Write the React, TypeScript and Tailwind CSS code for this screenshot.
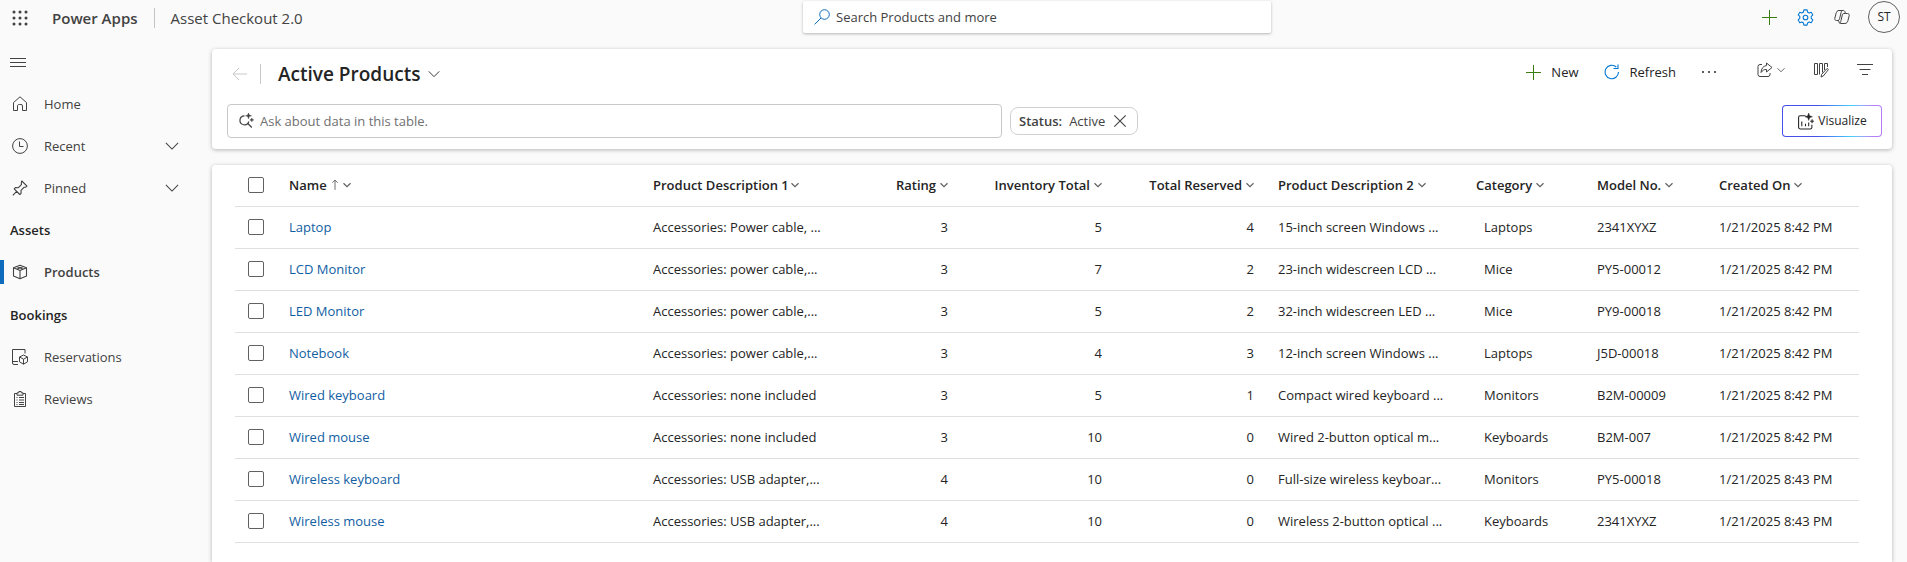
import React from "react";

type Align = "left" | "right";
type Column = { label: string; width: string; align: Align; indent?: boolean; sorted?: boolean; tight?: boolean };

const columns: Column[] = [
  { label: "Name", width: "w-auto", align: "left", sorted: true, tight: true },
  { label: "Product Description 1", width: "w-[199px]", align: "left", tight: true },
  { label: "Rating", width: "w-[120px]", align: "right" },
  { label: "Inventory Total", width: "w-[154px]", align: "right" },
  { label: "Total Reserved", width: "w-[152px]", align: "right" },
  { label: "Product Description 2", width: "w-[198px]", align: "left" },
  { label: "Category", width: "w-[121px]", align: "left", indent: true },
  { label: "Model No.", width: "w-[122px]", align: "left" },
  { label: "Created On", width: "w-[152px]", align: "left" },
];

const rows: string[][] = [
  ["Laptop", "Accessories: Power cable, ...", "3", "5", "4", "15-inch screen Windows ...", "Laptops", "2341XYXZ", "1/21/2025 8:42 PM"],
  ["LCD Monitor", "Accessories: power cable,...", "3", "7", "2", "23-inch widescreen LCD ...", "Mice", "PY5-00012", "1/21/2025 8:42 PM"],
  ["LED Monitor", "Accessories: power cable,...", "3", "5", "2", "32-inch widescreen LED ...", "Mice", "PY9-00018", "1/21/2025 8:42 PM"],
  ["Notebook", "Accessories: power cable,...", "3", "4", "3", "12-inch screen Windows ...", "Laptops", "J5D-00018", "1/21/2025 8:42 PM"],
  ["Wired keyboard", "Accessories: none included", "3", "5", "1", "Compact wired keyboard ...", "Monitors", "B2M-00009", "1/21/2025 8:42 PM"],
  ["Wired mouse", "Accessories: none included", "3", "10", "0", "Wired 2-button optical m...", "Keyboards", "B2M-007", "1/21/2025 8:42 PM"],
  ["Wireless keyboard", "Accessories: USB adapter,...", "4", "10", "0", "Full-size wireless keyboar...", "Monitors", "PY5-00018", "1/21/2025 8:43 PM"],
  ["Wireless mouse", "Accessories: USB adapter,...", "4", "10", "0", "Wireless 2-button optical ...", "Keyboards", "2341XYXZ", "1/21/2025 8:43 PM"],
];

function Icon({ children, className = "size-4", stroke = 1 }: { children: React.ReactNode; className?: string; stroke?: number }) {
  return (
    <svg viewBox="0 0 16 16" className={`shrink-0 ${className}`} fill="none" stroke="currentColor" strokeWidth={stroke} aria-hidden="true">
      {children}
    </svg>
  );
}

const Chevron = ({ className = "size-3", stroke = 1.2 }: { className?: string; stroke?: number }) => (
  <Icon className={className} stroke={stroke}><path d="M1 4.500 8 11.500 15 4.500" /></Icon>
);
const Plus = () => <Icon className="size-4 text-[#3b7d0f]"><path d="M8.500 1v15M1 8.500h15" /></Icon>;
const HomeIcon = () => (
  <Icon><path d="M1.500 6.600 8 .8l6.500 5.800V14.500h-4V10a1.500 1.500 0 0 0-1.500-1.500H7.500A1.500 1.500 0 0 0 5.500 10v4.500h-4z" strokeLinejoin="round" /></Icon>
);
const ClockIcon = () => <Icon><circle cx="8" cy="8" r="7.400" /><path d="M7.500 3.500v5h4" /></Icon>;
const PinIcon = () => (
  <Icon stroke={1.100}><path d="m9.800 1 5.200 5.200-1.200 1-1.800.1-3 3 .1 3-1.300 1.200L2.200 8.900l1.200-1.300 3 .1 3-3V2.200zM4.900 11.200.8 15.300" strokeLinejoin="round" /></Icon>
);
const BoxIcon = () => (
  <Icon stroke={1.100}><path d="m8 1.300 6.500 2.500v8.300L8 14.700l-6.500-2.600V3.800zM1.500 3.800 8 6.500l6.500-2.700M8 6.500v8.200M4.700 2.600l6.600 2.700M11.300 2.600 4.700 5.300" strokeLinejoin="round" /></Icon>
);
const ReservationIcon = () => (
  <Icon><path d="M6 15.500H2A1.500 1.500 0 0 1 .5 14V.5h12.500v4M.500 12.500H6M11.500 6l4 2v4.800l-4 2.400-4-2.400V8zM7.500 8l4 2.200 4-2.200M11.500 10.200v5" strokeLinejoin="round" /></Icon>
);
const ClipboardIcon = () => (
  <Icon><path d="M5 2.500H2.500v13h11v-13H11M5 1.800h1.800V.5h2.400v1.300H11v2.400H5zM4.500 6.500h1M7 6.500h5M4.500 9h1M7 9h5M4.500 11.500h1M7 11.500h5M4.500 13.500h1M7 13.500h5" /></Icon>
);

function NavItem({ icon, label, expandable, selected }: { icon: React.ReactNode; label: string; expandable?: boolean; selected?: boolean }) {
  return (
    <li>
      <a href="#" aria-current={selected ? "page" : undefined} className="flex h-[42px] items-center pr-[33px] text-[#424242]">
        <span className={`h-6 w-1 ${selected ? "bg-[#0f6cbd]" : ""}`} />
        <span className="ml-2 flex w-8">{icon}</span>
        <span className={`flex-1 ${selected ? "font-semibold" : ""}`}>{label}</span>
        {expandable && <Chevron className="size-3.5" />}
      </a>
    </li>
  );
}

const Checkbox = ({ label }: { label: string }) => (
  <input type="checkbox" aria-label={label} className="ml-[13px] block size-4 appearance-none rounded-xs border border-[#616161] bg-white checked:bg-[#0f6cbd]" />
);

function Header() {
  return (
    <header className="grid h-[49px] shrink-0 grid-cols-[803fr_468px_636fr] items-start">
      <div className="flex h-9 items-center">
        <button aria-label="App launcher" className="ml-3 text-[#424242]">
          <svg viewBox="0 0 16 16" className="size-4" fill="currentColor" aria-hidden="true">
            {[2, 8, 14].map((y) => [2, 8, 14].map((x) => <circle key={`${x}-${y}`} cx={x} cy={y} r="1.500" />))}
          </svg>
        </button>
        <span className="ml-6 text-[15px] font-semibold text-[#424242]">Power Apps</span>
        <span className="ml-4 h-5 w-px bg-[#c4c4c4]" />
        <span className="ml-4 text-[15px] text-[#424242]">Asset Checkout 2.0</span>
      </div>
      <label className="mt-px flex h-8 items-center gap-1.5 rounded-xs bg-white px-[11px] shadow-[0_1px_3px_rgba(0,0,0,0.28)]">
        <Icon className="size-4 text-[#0f6cbd]"><circle cx="10.500" cy="5.500" r="4.800" /><path d="M7 9 .6 15.400" /></Icon>
        <input type="text" aria-label="Search" placeholder="Search Products and more" className="flex-1 bg-transparent outline-none placeholder:text-[#424242]" />
      </label>
      <div className="flex h-[34px] items-center justify-end pr-[7px]">
        <button aria-label="New record" className="mr-5"><Plus /></button>
        <button aria-label="Settings" className="mr-5 text-[#0078d4]">
          <Icon className="size-[17px]"><circle cx="8" cy="8" r="2.200" /><path d="M6.500.8h3l.4 2 1.500.9 2-.7 1.500 2.600-1.500 1.400v1.900l1.500 1.400-1.500 2.700-2-.7-1.500.9-.4 2h-3l-.4-2-1.500-.9-2 .7-1.500-2.700 1.500-1.400V7L1.100 5.600 2.600 3l2 .7 1.500-.9z" strokeLinejoin="round" /></Icon>
        </button>
        <button aria-label="Copilot" className="mr-[18px] text-[#424242]">
          <Icon className="size-4"><path d="M5 1.500h4.200c1 0 1.500.6 1.800 1.500l.5 1.500h2c1.300 0 2 1 1.700 2.200l-1.300 5c-.4 1.600-1.300 2.800-3 2.800H6.800c-1 0-1.500-.6-1.800-1.500L4.500 11.500h-2C1.200 11.500.5 10.500.8 9.300l1.300-5C2.500 2.700 3.400 1.500 5 1.500zM8.300 1.500c-.8.500-1 1.200-1.300 2.300L5.700 9.300c-.3 1.300-.7 2.200-2 2.200M11.500 4.500H9.800c-.8 0-1.200.5-1.400 1.200L7 11.500c-.4 1.600-.6 2.500-1.400 2.800" /></Icon>
        </button>
        <button aria-label="Account ST" className="size-8 rounded-full border border-[#616161] text-xs text-[#242424]">ST</button>
      </div>
    </header>
  );
}

function Sidebar() {
  return (
    <nav aria-label="Site map" className="w-[212px] shrink-0">
      <button aria-label="Toggle navigation" className="ml-[10px] mt-1 block text-[#424242]">
        <svg viewBox="0 0 16 18" className="h-[18px] w-4" fill="none" stroke="currentColor" aria-hidden="true"><path d="M0 5.500h16M0 9.500h16M0 13.500h16" /></svg>
      </button>
      <ul className="mt-3">
        <NavItem icon={<HomeIcon />} label="Home" />
        <NavItem icon={<ClockIcon />} label="Recent" expandable />
        <NavItem icon={<PinIcon />} label="Pinned" expandable />
      </ul>
      <h2 className="flex h-[42px] items-center pl-[10px] font-semibold text-[#242424]">Assets</h2>
      <ul><NavItem icon={<BoxIcon />} label="Products" selected /></ul>
      <h2 className="flex h-[43px] items-center pl-[10px] font-semibold text-[#242424]">Bookings</h2>
      <ul>
        <NavItem icon={<ReservationIcon />} label="Reservations" />
        <NavItem icon={<ClipboardIcon />} label="Reviews" />
      </ul>
    </nav>
  );
}

function CommandCard() {
  return (
    <section className="h-[100px] shrink-0 rounded-[4px] bg-white shadow-[0_1px_4px_rgba(0,0,0,0.28)]">
      <div className="flex h-[50px] items-center pl-5 pr-[19px]">
        <button aria-label="Back" className="text-[#c8c8c8]"><Icon className="size-4"><path d="M7 2 1 8l6 6M1 8h14" /></Icon></button>
        <span className="ml-3 h-5 w-px bg-[#c8c8c8]" />
        <button className="ml-[17px] flex items-center gap-2 text-[19px] font-semibold text-[#242424]">
          <h1>Active Products</h1>
          <Chevron />
        </button>
        <div className="mb-1 ml-auto flex items-center text-[#242424]">
          <button className="flex items-center gap-2.5"><Plus />New</button>
          <button className="ml-[25px] flex items-center gap-2.5">
            <Icon className="size-4 text-[#0078d4]" stroke={1.100}><path d="M14.500 8A6.700 6.700 0 1 1 12.300 3M9.500 4.500h4.500V.5" /></Icon>
            Refresh
          </button>
          <button aria-label="More commands" className="ml-[25px]">
            <svg viewBox="0 0 16 16" className="size-4" fill="currentColor" aria-hidden="true"><circle cx="2" cy="8" r="1" /><circle cx="8" cy="8" r="1" /><circle cx="14" cy="8" r="1" /></svg>
          </button>
          <div className="mb-1 ml-10 flex items-center gap-7 text-[#424242]">
            <button aria-label="Share" className="flex items-center gap-1">
              <Icon className="size-4"><path d="M5 2.500H3a2 2 0 0 0-2 2v8a2 2 0 0 0 2 2h8a2 2 0 0 0 2-2V11M9.500 1l5.500 4.500L9.500 10V7.500C7 7.300 5.500 8.500 4 10.500 4.300 6.800 6 4 9.500 3.500z" strokeLinejoin="round" /></Icon>
              <Chevron className="size-2" stroke={1.600} />
            </button>
            <button aria-label="Edit columns">
              <Icon className="size-4"><path d="M1.500 1.500h3v11h-3zM6.500 12.500v-11h3v9M11.500 8v-6.500h3V5" /><path d="m8 15 .7-2.700 5-5.500c.9-.8 2 .3 1.300 1.300l-4.700 5.900z" fill="white" /></Icon>
            </button>
            <button aria-label="Edit filters">
              <Icon className="size-4" stroke={1.200}><path d="M0 2.500h16M2.500 7.500h11M5 12.500h6" /></Icon>
            </button>
          </div>
        </div>
      </div>
      <div className="flex items-center pl-[15px] pr-[10px] pt-[5px]">
        <label className="flex h-[34px] w-[775px] items-center gap-1.5 rounded-[4px] border border-[#c8c8c8] px-[10px]">
          <Icon className="size-4 text-[#424242]" stroke={1.200}><path d="M6.500 2.800A4.500 4.500 0 1 0 10.800 8.500M9.800 10.500l4 4" /><path d="M10.500-.2l.8 2.200 2.200.8-2.200.8-.8 2.200-.8-2.200-2.200-.8 2.200-.8zM13.800 5l.6 1.300 1.400.6-1.400.6-.6 1.300-.6-1.300-1.400-.6 1.400-.6z" fill="currentColor" strokeWidth="0.4" /></Icon>
          <input type="text" aria-label="Ask about data" placeholder="Ask about data in this table." className="flex-1 bg-transparent outline-none placeholder:text-[#707070]" />
        </label>
        <div className="ml-2 flex h-7 items-center rounded-lg border border-[#d1d1d1] pl-2 pr-[10px] text-[#424242]">
          <span className="font-semibold">Status:</span>
          <span className="ml-[7px]">Active</span>
          <button aria-label="Remove filter" className="ml-2"><Icon className="size-[14px]" stroke={1.300}><path d="m1.500 1.500 13 13M14.500 1.500l-13 13" /></Icon></button>
        </div>
        <div className="ml-auto rounded-[4px] bg-linear-to-r from-[#464feb] from-35% via-[#47cffa] via-70% to-[#b47cf8] to-92% p-px">
          <button className="flex h-[30px] w-[98px] items-center justify-center gap-1 rounded-[3px] bg-white text-xs text-[#242424]">
            <Icon className="size-[17px]"><path d="M8 2.500H3A1.500 1.500 0 0 0 1.500 4v9.500A1.500 1.500 0 0 0 3 15h9.500a1.500 1.500 0 0 0 1.500-1.500V11M4.500 8v4.500M8 10v2.500M11 9v3.500" /><path d="M11 0l.9 2.600 2.600.9-2.600.9L11 7l-.9-2.600-2.600-.9 2.600-.9zM14.200 5.800l.5 1.400 1.300.5-1.300.5-.5 1.400-.5-1.400-1.300-.5 1.300-.5z" fill="currentColor" strokeWidth="0.4" /></Icon>
            Visualize
          </button>
        </div>
      </div>
    </section>
  );
}

function ProductTable() {
  return (
    <section className="flex-1 rounded-t-[4px] bg-white pl-[23px] pr-[33px] shadow-[0_1px_4px_rgba(0,0,0,0.28)]">
      <table className="w-full table-fixed border-collapse text-[#242424]">
        <thead>
          <tr className="h-[41px] border-b border-[#e0e0e0]">
            <th className="w-[42px] p-0"><Checkbox label="Select all rows" /></th>
            {columns.map((c) => (
              <th key={c.label} scope="col" className={`${c.width} whitespace-nowrap px-3 py-0 font-semibold`}>
                <button className={`flex w-full items-center ${c.tight ? "gap-0.5" : "gap-1"} ${c.align === "right" ? "justify-end" : ""}`}>
                  {c.label}
                  {c.sorted && <Icon className="h-4 w-3 text-[#424242]"><path d="M8 14.500V1.500M4.500 5 8 1.500 11.500 5" /></Icon>}
                  <Chevron className="size-2 text-[#616161]" stroke={2.400} />
                </button>
              </th>
            ))}
          </tr>
        </thead>
        <tbody>
          {rows.map((row) => (
            <tr key={row[0]} className="h-[42px] border-b border-[#e0e0e0]">
              <td className="p-0"><Checkbox label={`Select ${row[0]}`} /></td>
              {row.map((value, i) => (
                <td key={columns[i].label} className={`truncate py-0 pr-3 ${columns[i].indent ? "pl-5" : "pl-3"} ${columns[i].align === "right" ? "text-right" : ""}`}>
                  {i === 0 ? <a href="#" className="text-[#115ea3]">{value}</a> : value}
                </td>
              ))}
            </tr>
          ))}
        </tbody>
      </table>
    </section>
  );
}

export default function App() {
  return (
    <div className="flex min-h-screen flex-col overflow-hidden bg-[#fafafa] font-['Open_Sans','Noto_Sans',sans-serif] text-[13px] leading-5">
      <Header />
      <div className="flex flex-1">
        <Sidebar />
        <main className="flex min-w-0 flex-1 flex-col gap-4 pr-[15px]">
          <CommandCard />
          <ProductTable />
        </main>
      </div>
    </div>
  );
}
